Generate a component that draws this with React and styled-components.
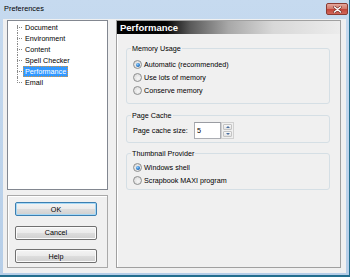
import React from 'react'
import styled, { createGlobalStyle } from 'styled-components'

const GlobalStyle = createGlobalStyle`
  html, body {
    margin: 0;
    padding: 0;
    background: #ffffff;
  }
  body {
    font-family: "Liberation Sans", Arial, sans-serif;
    font-size: 7.2px;
    color: #000;
  }
`

const Window = styled.div`
  width: 350px;
  height: 277px;
  box-sizing: border-box;
  display: flex;
  flex-direction: column;
  background: linear-gradient(#c6daef, #b6cee8);
  border-right: 1px solid #236e8e;
  border-bottom: 2px solid #236e8e;
  padding: 0 3px 2px 3px;
`

const TitleBar = styled.div`
  height: 19px;
  flex: none;
  display: flex;
  align-items: center;
  justify-content: space-between;
  padding: 0 0 2px 1px;
  box-sizing: border-box;
  margin-right: -4px;
`

const Caption = styled.span`
  font-size: 7.4px;
  color: #000;
`

const CloseButton = styled.div`
  width: 20px;
  height: 10px;
  border: 1px solid #8b3b32;
  border-radius: 2px;
  background: linear-gradient(#e4a89d 0%, #d47a6c 45%, #c4463a 55%, #d0675a 100%);
  display: flex;
  align-items: center;
  justify-content: center;
  margin-right: 2px;
  margin-top: 1px;
`

const Client = styled.div`
  flex: 1;
  display: flex;
  gap: 8px;
  background: #f0f0f0;
  padding: 1px 5px 5px 4px;
`

const LeftColumn = styled.div`
  width: 101px;
  display: flex;
  flex-direction: column;
  gap: 5px;
`

const TreeBox = styled.div`
  flex: 1;
  background: #fff;
  border: 1px solid #828790;
  padding: 1px 0 0 9px;
`

const TreeItem = styled.div`
  position: relative;
  height: 11px;
  display: flex;
  align-items: center;
  padding-left: 6px;

  &::before {
    content: '';
    position: absolute;
    left: 0;
    top: 5px;
    width: 5px;
    border-top: 1px dotted #8a8a8a;
  }

  &::after {
    content: '';
    position: absolute;
    left: 0;
    top: ${p => (p.$first ? '3px' : '0')};
    height: ${p => (p.$last ? '6px' : 'auto')};
    bottom: ${p => (p.$last ? 'auto' : '0')};
    border-left: 1px dotted #8a8a8a;
  }
`

const TreeLabel = styled.span`
  line-height: 9px;
  padding: 0 1px;
  border: 1px dotted ${p => (p.$selected ? '#d8953e' : 'transparent')};
  background: ${p => (p.$selected ? '#3399ff' : 'transparent')};
  color: ${p => (p.$selected ? '#fff' : '#000')};
`

const ButtonGroup = styled.div`
  height: 73px;
  box-sizing: border-box;
  border: 1px solid #a9a9a9;
  box-shadow: inset 1px 1px 0 #fff;
  padding: 6px 10px 4px 7px;
  display: flex;
  flex-direction: column;
  justify-content: space-between;
`

const Button = styled.button`
  height: 14px;
  width: 82px;
  padding: 0;
  font-family: inherit;
  font-size: 7.2px;
  color: #000;
  border: 1px solid ${p => (p.$default ? '#3c7fb1' : '#707070')};
  border-radius: 2px;
  background: linear-gradient(#f4f4f4 0%, #ebebeb 48%, #dddddd 52%, #d0d0d0 100%);
  box-shadow: inset 0 0 0 1px ${p => (p.$default ? '#a7d9f6' : '#fbfbfb')};
`

const Panel = styled.div`
  flex: 1;
  display: flex;
  flex-direction: column;
  border: 1px solid #a0a0a0;
  box-shadow: inset 1px 1px 0 #ffffff;
`

const PanelHeader = styled.div`
  height: 13px;
  display: flex;
  align-items: center;
  padding-left: 3px;
  font-size: 9.5px;
  font-weight: bold;
  color: #fff;
  background: linear-gradient(to right, #000 0%, #050505 22%, #5a5a5a 33%, #a8a8a8 50%, #d8d8d8 70%, #ececec 100%);
`

const PanelBody = styled.div`
  padding: 0 10px 0 9px;
  display: flex;
  flex-direction: column;
`

const Group = styled.fieldset`
  margin: ${p => p.$gap}px 0 0 0;
  padding: ${p => p.$top}px 6px ${p => p.$bottom}px 6px;
  border: 1px solid #d5dfe5;
  border-radius: 3px;
  min-width: 0;
`

const Legend = styled.legend`
  line-height: 9px;
  padding: 0 1px;
  margin-left: -2px;
`

const Row = styled.div`
  height: 13px;
  display: flex;
  align-items: center;
  gap: 2px;
`

const RadioDot = styled.span`
  position: relative;
  width: 9px;
  height: 9px;
  box-sizing: border-box;
  border-radius: 50%;
  border: 1px solid #8e8f8f;
  background: radial-gradient(circle at 60% 60%, #f6f6f6 0%, #e2e2e2 60%, #cfcfcf 100%);

  &::after {
    content: '';
    display: ${p => (p.$checked ? 'block' : 'none')};
    position: absolute;
    left: 1.5px;
    top: 1.5px;
    width: 4px;
    height: 4px;
    border-radius: 50%;
    background: radial-gradient(circle at 40% 35%, #8fd0ff 0%, #2a78c8 55%, #124a86 100%);
  }
`

const CacheRow = styled.div`
  height: 17px;
  display: flex;
  align-items: center;
`

const CacheLabel = styled.span`
  width: 61px;
`

const SpinBox = styled.div`
  display: flex;
  height: 17px;
`

const SpinInput = styled.div`
  width: 27px;
  height: 17px;
  box-sizing: border-box;
  border: 1px solid #abadb3;
  border-top-color: #9a9ca2;
  background: #fff;
  padding-left: 2px;
  display: flex;
  align-items: center;
`

const SpinButtons = styled.div`
  width: 13px;
  display: flex;
  flex-direction: column;
  border: 1px solid #d0d0d0;
  box-sizing: border-box;
  padding: 1px;
  gap: 1px;
  background: #f0f0f0;
`

const SpinArrow = styled.div`
  flex: 1;
  border: 1px solid #c3c3c3;
  border-radius: 1px;
  background: linear-gradient(#f8f8f8, #e2e2e2);
  display: flex;
  align-items: center;
  justify-content: center;

  &::after {
    content: '';
    border-left: 2px solid transparent;
    border-right: 2px solid transparent;
    border-${p => (p.$down ? 'top' : 'bottom')}: 2px solid #4a6fa0;
  }
`

function Radio({ checked, children }) {
  return (
    <Row>
      <RadioDot $checked={checked} />
      <span>{children}</span>
    </Row>
  )
}

const pages = ['Document', 'Environment', 'Content', 'Spell Checker', 'Performance', 'Email']

export default function App() {
  return (
    <>
      <GlobalStyle />
      <Window>
        <TitleBar>
          <Caption>Preferences</Caption>
          <CloseButton>
            <svg width="9" height="7" viewBox="0 0 9 7">
              <path d="M1.5 1 L7.5 6 M7.5 1 L1.5 6" stroke="#6b2a24" strokeWidth="2.6" strokeLinecap="round" />
              <path d="M1.5 1 L7.5 6 M7.5 1 L1.5 6" stroke="#ffffff" strokeWidth="1.5" strokeLinecap="round" />
            </svg>
          </CloseButton>
        </TitleBar>
        <Client>
          <LeftColumn>
            <TreeBox>
              {pages.map((name, i) => (
                <TreeItem key={name} $first={i === 0} $last={i === pages.length - 1}>
                  <TreeLabel $selected={name === 'Performance'}>{name}</TreeLabel>
                </TreeItem>
              ))}
            </TreeBox>
            <ButtonGroup>
              <Button $default>OK</Button>
              <Button>Cancel</Button>
              <Button>Help</Button>
            </ButtonGroup>
          </LeftColumn>
          <Panel>
            <PanelHeader>Performance</PanelHeader>
            <PanelBody>
              <Group $gap={10} $top={5} $bottom={6}>
                <Legend>Memory Usage</Legend>
                <Radio checked>Automatic (recommended)</Radio>
                <Radio>Use lots of memory</Radio>
                <Radio>Conserve memory</Radio>
              </Group>
              <Group $gap={7} $top={2} $bottom={3}>
                <Legend>Page Cache</Legend>
                <CacheRow>
                  <CacheLabel>Page cache size:</CacheLabel>
                  <SpinBox>
                    <SpinInput>5</SpinInput>
                    <SpinButtons>
                      <SpinArrow />
                      <SpinArrow $down />
                    </SpinButtons>
                  </SpinBox>
                </CacheRow>
              </Group>
              <Group $gap={6} $top={3} $bottom={2}>
                <Legend>Thumbnail Provider</Legend>
                <Radio checked>Windows shell</Radio>
                <Radio>Scrapbook MAXI program</Radio>
              </Group>
            </PanelBody>
          </Panel>
        </Client>
      </Window>
    </>
  )
}
